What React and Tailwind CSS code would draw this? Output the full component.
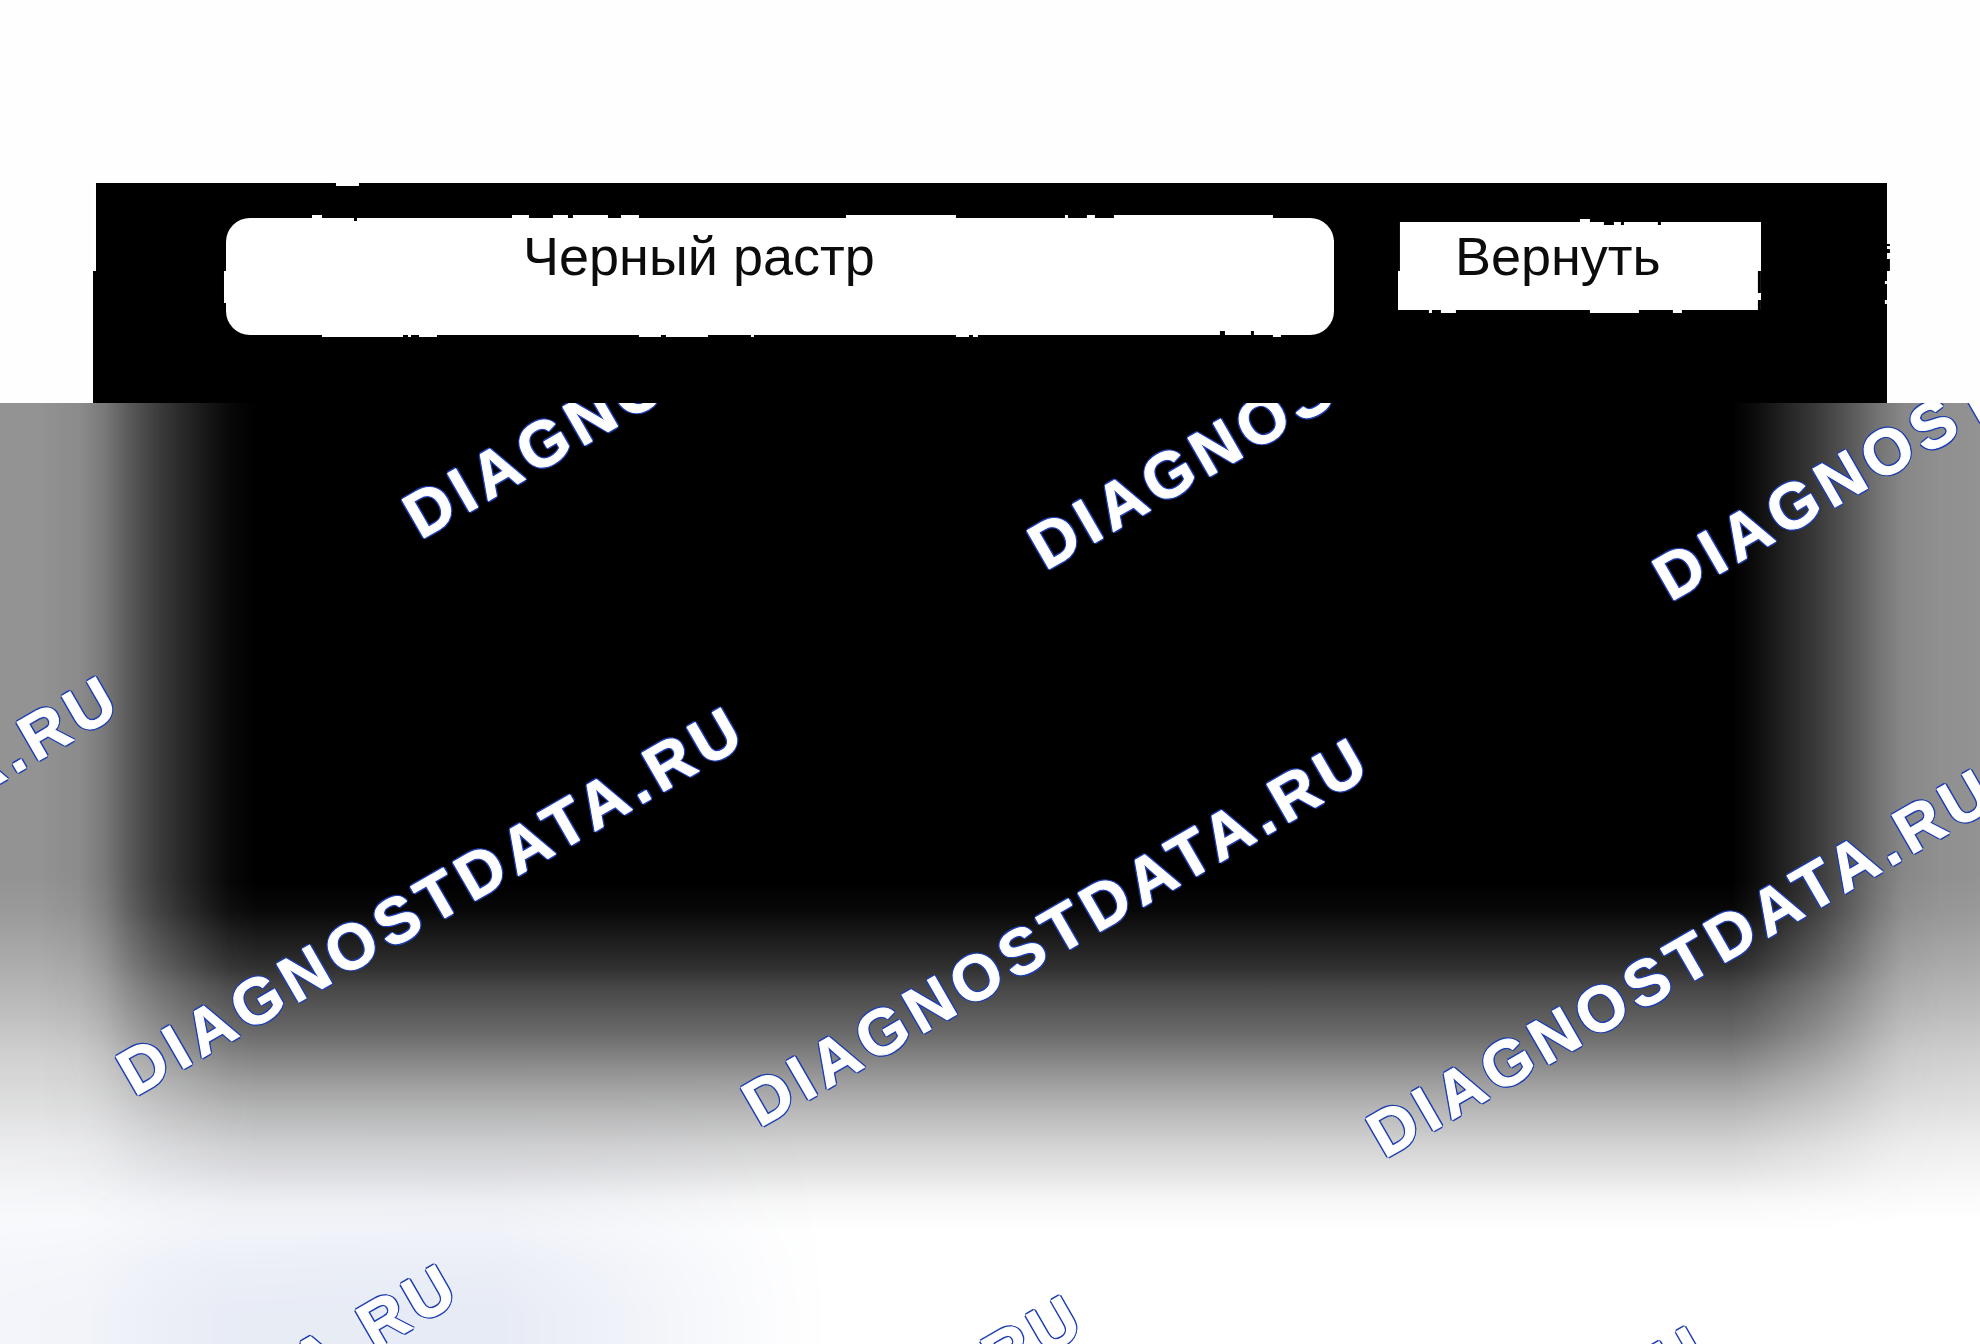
import React from 'react';

const MARK = 'DIAGNOSTDATA.RU';

// diagonal lattice the watermark repeats on, px from the top left of the backdrop
const ORIGIN = { x: 138, y: 692 };
const STEP = { x: 625, y: 31 };
const ROW = { x: -286, y: 557 };

const ROWS = [
    { row: -1, cols: [0, 1, 2] },
    { row: 0, cols: [-1, 0, 1, 2] },
    { row: 1, cols: [0, 1, 2] },
];

const marks = ROWS.flatMap(({ row, cols }) =>
    cols.map((col) => ({
        id: `${row}:${col}`,
        left: ORIGIN.x + col * STEP.x + row * ROW.x,
        top: ORIGIN.y + col * STEP.y + row * ROW.y,
    }))
);

// rough nubs along the panel, title plate and button borders
const RaggedEdges = () => (
    <svg
        className="pointer-events-none absolute inset-0 h-full w-full"
        viewBox="0 0 1794 220"
        preserveAspectRatio="none"
        aria-hidden="true"
    >
        <g fill="#ffffff">
            <path d="M0 0h3v88h-3z M243 0h23v3h-23z" />
            <path d="M219 32h10v4h-10z M419 32h17v4h-17z M460 32h15v4h-15z M480 32h35v4h-35z M528 32h18v4h-18z" />
            <path d="M753 32h110v4h-110z M972 32h3v4h-3z M994 32h8v4h-8z M1021 32h159v4h-159z" />
            <path d="M229 151h81v3h-81z M315 151h3v3h-3z M326 151h18v3h-18z M546 151h22v3h-22z M573 151h42v3h-42z" />
            <path d="M658 151h3v3h-3z M863 151h13v3h-13z M880 151h5v3h-5z M1180 151h8v3h-8z" />
            <path d="M131 88h3v32h-3z M1238 57h3v32h-3z" />
            <path d="M1487 36h10v4h-10z M1336 127h3v3h-3z M1348 127h15v3h-15z M1497 127h49v3h-49z M1580 127h9v3h-9z" />
            <path d="M1792 98h2v3h-2z M1792 117h2v4h-2z" />
        </g>
    </svg>
);

// dark specks that bite into the white plates, and past the right side of the panel
const DarkSpecks = () => (
    <svg
        className="pointer-events-none absolute inset-0 h-full w-full overflow-visible"
        viewBox="0 0 1794 220"
        preserveAspectRatio="none"
        aria-hidden="true"
    >
        <g fill="#000000">
            <path d="M261 35h3v3h-3z M1304 39h3v49h-3z M1665 88h3v22h-3z M1665 117h3v11h-3z" />
            <path d="M1127 148h5v4h-5z M1158 148h3v4h-3z" />
            <path d="M1511 39h10v3h-10z M1528 39h3v3h-3z M1565 39h3v3h-3z" />
            <path d="M1794 61h3v2h-3z M1794 66h3v4h-3z M1794 76h3v12h-3z" />
        </g>
    </svg>
);

const Header = () => (
    <header className="bg-[#fefefe] px-[4.7%] pt-[183px]">
        <div className="relative flex items-start gap-[64px] bg-black pt-[35px] pr-[126px] pb-[68px] pl-[133px]">
            <RaggedEdges />
            <h1 className="relative h-[117px] flex-1 rounded-3xl bg-white pt-[6px] pl-[297px] text-[54px] leading-[64px] whitespace-nowrap text-[#0c0c0c]">
                Черный растр
            </h1>
            <button
                type="button"
                className="relative mt-1 h-[88px] w-[363px] shrink-0 cursor-pointer bg-white pt-[2px] pb-[22px] pl-[57px] text-left text-[54px] leading-[64px] text-[#0c0c0c]"
            >
                Вернуть
            </button>
            <DarkSpecks />
        </div>
    </header>
);

const Backdrop = () => (
    <main className="relative min-h-[941px] flex-1 overflow-hidden bg-[linear-gradient(to_bottom,#939393_0%,#939393_50%,#9a9a9a_54%,#aaaaaa_59%,#bbbbbb_64%,#cfcfcf_69%,#dedede_74%,#efefef_79%,#fafafa_84%,#ffffff_87%)]">
        {/* dark core, faded out on both sides */}
        <div className="absolute inset-0 bg-[linear-gradient(to_bottom,#000000_0%,#000000_51%,#080808_54%,#161616_56%,#303030_60%,#464646_62%,#6a6a6a_67%,#9c9c9c_72%,#b6b6b6_75%,#d4d4d4_79%,#dfdfdf_81%,#ececec_83%,#f8f8f8_85%,#ffffff_88%)] mask-[linear-gradient(to_right,rgba(0,0,0,0)_2%,rgba(0,0,0,0.05)_4%,rgba(0,0,0,0.18)_5.3%,rgba(0,0,0,0.4)_6.6%,rgba(0,0,0,0.57)_7.8%,rgba(0,0,0,0.7)_9%,rgba(0,0,0,0.83)_10.3%,rgba(0,0,0,0.95)_11.6%,#000_13%,#000_87.5%,rgba(0,0,0,0.92)_88.6%,rgba(0,0,0,0.81)_89.7%,rgba(0,0,0,0.59)_91.9%,rgba(0,0,0,0.37)_93.7%,rgba(0,0,0,0.22)_94.8%,rgba(0,0,0,0.08)_96.1%,rgba(0,0,0,0.02)_98%,rgba(0,0,0,0)_100%)]" />
        {/* pale blue tint in the lower left */}
        <div className="absolute bottom-0 left-0 h-[30%] w-[42%] bg-[#e7ebf5] mix-blend-multiply mask-[linear-gradient(to_right,rgba(0,0,0,0.5)_0%,rgba(0,0,0,0.55)_10%,rgba(0,0,0,0.8)_19%,rgba(0,0,0,0.95)_27%,#000_60%,rgba(0,0,0,0.65)_74%,rgba(0,0,0,0.15)_92%,transparent_100%),linear-gradient(to_bottom,transparent_0%,rgba(0,0,0,0.3)_31%,rgba(0,0,0,0.5)_54%,rgba(0,0,0,0.85)_72%,#000_88%)] mask-intersect" />
        {marks.map(({ id, left, top }) => (
            <span
                key={id}
                style={{ left, top }}
                className="absolute h-0 w-0 -rotate-30 origin-top-left"
            >
                <span className="absolute bottom-[-14px] left-[-4px] text-[64px] leading-[72px] font-bold tracking-widest whitespace-nowrap text-white select-none [-webkit-text-stroke:1px_#ffffff] [text-shadow:2px_0_#1f3fb0,-2px_0_#1f3fb0,0_2px_#1f3fb0,0_-2px_#1f3fb0,1px_1px_#1f3fb0,-1px_-1px_#1f3fb0,1px_-1px_#1f3fb0,-1px_1px_#1f3fb0]">
                    {MARK}
                </span>
            </span>
        ))}
    </main>
);

const App = () => (
    <div className="flex min-h-screen flex-col bg-white font-['Liberation_Sans',Arial,sans-serif]">
        <Header />
        <Backdrop />
    </div>
);

export default App;
